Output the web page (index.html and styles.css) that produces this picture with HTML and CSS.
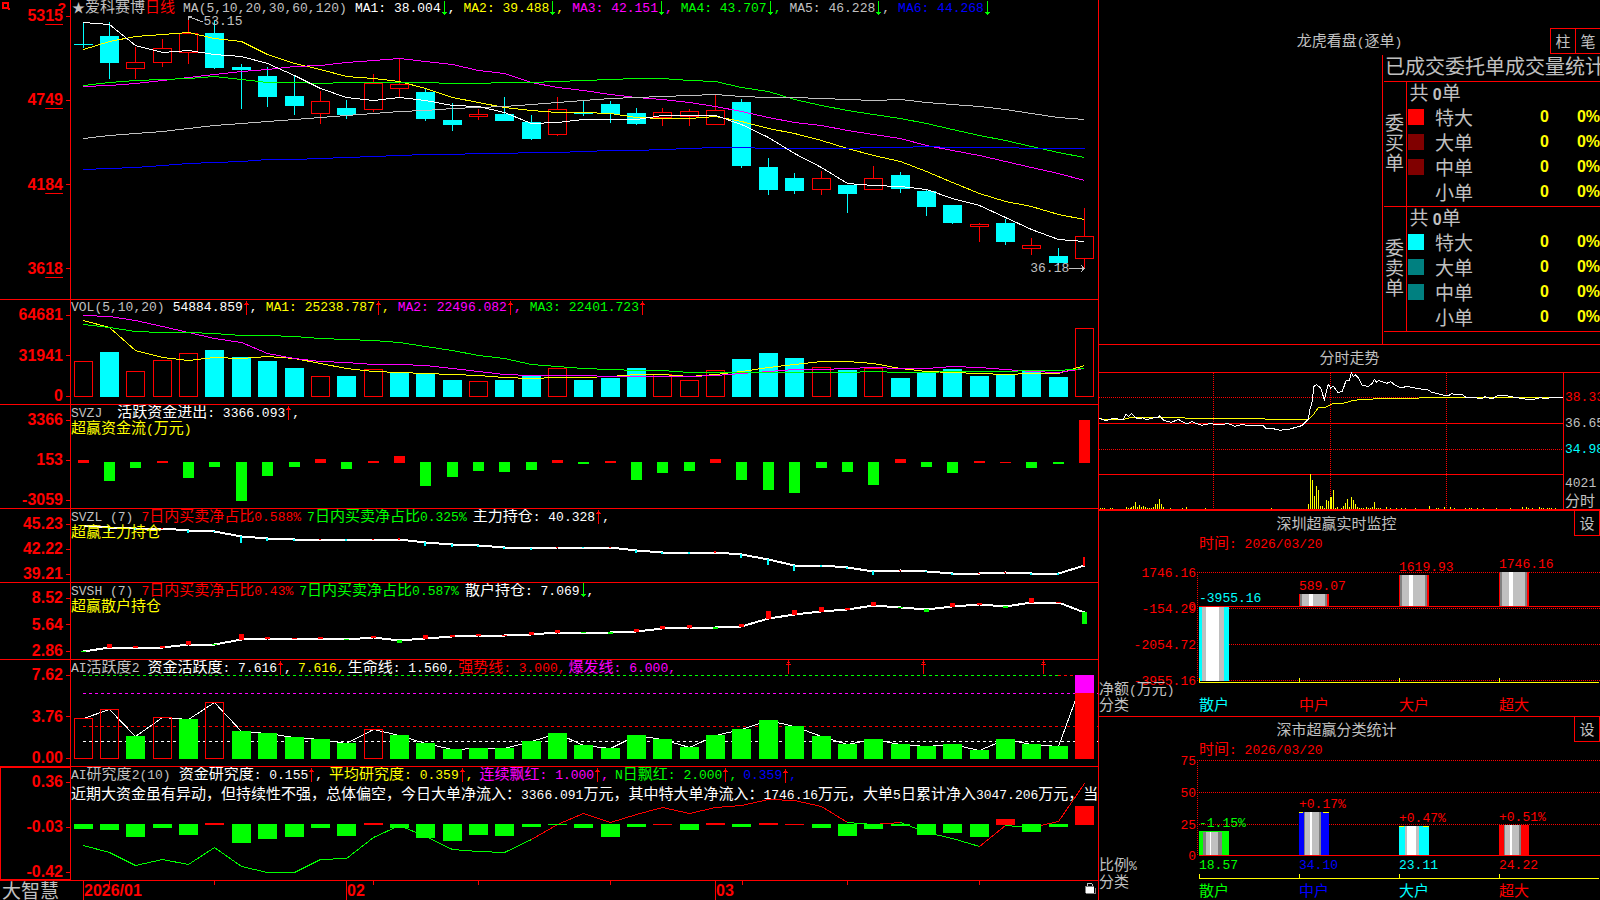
FILE: index.html
```html
<!DOCTYPE html>
<html lang="zh-CN">
<head>
    <meta charset="UTF-8">
    <meta name="viewport" content="width=device-width, initial-scale=1.0">
    <title>爱科赛博 日线</title>
    <link rel="stylesheet" href="styles.css">
</head>
<body>
    <svg class="defs" aria-hidden="true">
        <symbol id="up" viewBox="0 0 6 16"><path d="M3 1h1v14h-1zM2 3h3v2h-3zM1 4h1v1h-1zM5 4h1v1h-1z"/></symbol>
        <symbol id="down" viewBox="0 0 6 16"><path d="M3 0h1v14h-1zM2 11h3v2h-3zM1 11h1v1h-1zM5 11h1v1h-1z"/></symbol>
    </svg>
    <div class="terminal">
        <main class="charts">
            <section class="row price-row">
                <div class="axis">
                    <svg class="corner" width="10" height="10" viewBox="0 0 10 10"><path d="M0 0h7v6h1v2h-2v-1h-6zM2 2v3h3v-3z" fill-rule="evenodd"/></svg>
                    <button class="help" aria-label="帮助">?</button>
                    <span><b>53<u>15</u></b></span><span><b>47<u>49</u></b></span><span><b>41<u>84</u></b></span><span><b>36<u>18</u></b></span>
                </div>
                <div class="plot">
                    <svg id="price" viewBox="71 0 1027 299" preserveAspectRatio="none"></svg>
                    <div class="legend top-legend">
                        <h1>★<span class="cn">爱科赛博<em>日线</em></span></h1>
                        <span class="gray">MA(5,10,20,30,60,120)</span>
                        <span>MA1: 38.004<svg class="down"><use href="#down"/></svg>,</span>
                        <span class="yellow">MA2: 39.488<svg class="down"><use href="#down"/></svg>,</span>
                        <span class="magenta">MA3: 42.151<svg class="down"><use href="#down"/></svg>,</span>
                        <span class="green">MA4: 43.707<svg class="down"><use href="#down"/></svg>,</span>
                        <span class="gray">MA5: 46.228<svg class="down"><use href="#down"/></svg>,</span>
                        <span class="blue">MA6: 44.268<svg class="down"><use href="#down"/></svg></span>
                    </div>
                    <span class="note high">53.15</span>
                    <span class="note low">36.18</span>
                </div>
            </section>

            <section class="row">
                <div class="axis"><span><b>64681</b></span><span><b>31941</b></span><span><b>0</b></span></div>
                <div class="plot">
                    <svg id="volume" viewBox="71 300 1027 104" preserveAspectRatio="none"></svg>
                    <div class="legend volume-legend">
                        <span class="gray">VOL(5,10,20)</span>
                        <span>54884.859<svg class="up"><use href="#up"/></svg>,</span>
                        <span class="yellow">MA1: 25238.787<svg class="up"><use href="#up"/></svg>,</span>
                        <span class="magenta">MA2: 22496.082<svg class="up"><use href="#up"/></svg>,</span>
                        <span class="green">MA3: 22401.723<svg class="up"><use href="#up"/></svg></span>
                    </div>
                </div>
            </section>

            <section class="row">
                <div class="axis"><span><b>3366</b></span><span><b>153</b></span><span><b>-3059</b></span></div>
                <div class="plot">
                    <svg id="flow" viewBox="71 405 1027 103" preserveAspectRatio="none"></svg>
                    <div class="legend">
                        <span class="gray wide">SVZJ</span>
                        <span><span class="cn">活跃资金进出</span>: 3366.093<svg class="up"><use href="#up"/></svg>,</span>
                    </div>
                    <h2>超赢资金流<span>(</span>万元<span>)</span></h2>
                </div>
            </section>

            <section class="row">
                <div class="axis"><span><b>45.23</b></span><span><b>42.22</b></span><span><b>39.21</b></span></div>
                <div class="plot">
                    <svg id="main-hold" viewBox="71 509 1027 73" preserveAspectRatio="none"></svg>
                    <div class="legend">
                        <span class="gray name">SVZL (7)</span>
                        <span class="red">7<span class="cn">日内买卖净占比</span>0.588%</span>
                        <span class="green">7<span class="cn">日内买卖净占比</span>0.325%</span>
                        <span><span class="cn">主力持仓</span>: 40.328<svg class="up"><use href="#up"/></svg>,</span>
                    </div>
                    <h2>超赢主力持仓</h2>
                </div>
            </section>

            <section class="row">
                <div class="axis"><span><b>8.52</b></span><span><b>5.64</b></span><span><b>2.86</b></span></div>
                <div class="plot">
                    <svg id="retail-hold" viewBox="71 583 1027 76" preserveAspectRatio="none"></svg>
                    <div class="legend">
                        <span class="gray name">SVSH (7)</span>
                        <span class="red">7<span class="cn">日内买卖净占比</span>0.43%</span>
                        <span class="green">7<span class="cn">日内买卖净占比</span>0.587%</span>
                        <span><span class="cn">散户持仓</span>: 7.069<svg class="down"><use href="#down"/></svg>,</span>
                    </div>
                    <h2>超赢散户持仓</h2>
                </div>
            </section>

            <section class="row">
                <div class="axis"><span><b>7.62</b></span><span><b>3.76</b></span><span><b>0.00</b></span></div>
                <div class="plot">
                    <svg id="active" viewBox="71 660 1027 106" preserveAspectRatio="none"></svg>
                    <div class="legend">
                        <span class="gray name">AI<span class="cn">活跃度</span>2</span>
                        <span><span class="cn">资金活跃度</span>: 7.616<svg class="up"><use href="#up"/></svg>,</span>
                        <span class="yellow plain">7.616,</span>
                        <span class="plain"><span class="cn">生命线</span>: 1.560,</span>
                        <span class="red plain"><span class="cn">强势线</span>: 3.000,</span>
                        <span class="magenta plain"><span class="cn">爆发线</span>: 6.000,</span>
                    </div>
                </div>
            </section>

            <section class="row">
                <div class="axis selected"><span><b>0.36</b></span><span><b>-0.03</b></span><span><b>-0.42</b></span></div>
                <div class="plot">
                    <svg id="research" viewBox="71 767 1027 113" preserveAspectRatio="none"></svg>
                    <div class="legend">
                        <span class="gray name">AI<span class="cn">研究度</span>2(10)</span>
                        <span><span class="cn">资金研究度</span>: 0.155<svg class="up"><use href="#up"/></svg>,</span>
                        <span class="yellow"><span class="cn">平均研究度</span>: 0.359<svg class="up"><use href="#up"/></svg>,</span>
                        <span class="magenta"><span class="cn">连续飘红</span>: 1.000<svg class="up"><use href="#up"/></svg>,</span>
                        <span class="green">N<span class="cn">日飘红</span>: 2.000<svg class="up"><use href="#up"/></svg>,</span>
                        <span class="blue">0.359<svg class="up"><use href="#up"/></svg>,</span>
                    </div>
                    <p class="message">近期大资金虽有异动，但持续性不强，总体偏空，今日大单净流入：<span>3366.091</span>万元，其中特大单净流入：<span>1746.16</span>万元，大单<span>5</span>日累计净入<span>3047.206</span>万元，当日</p>
                </div>
            </section>

            <footer class="dates">
                <span class="brand">大智慧</span>
                <span></span>
                <b>2026/01</b>
                <b>02</b>
                <b>03</b>
                <svg id="ticks" viewBox="71 881 1027 19" preserveAspectRatio="none"></svg>
                <svg class="lock" width="11" height="13" viewBox="0 0 11 13"><path d="M2 4V2l1-1h3l1 1v2" fill="none" stroke="#c0c0c0"/><path d="M1 5h8v6h-8z" fill="#fff"/><path d="M0 4.5h9M.5 5v6M1 11.500h9.500v-6" fill="none" stroke="#808080"/></svg>
            </footer>
        </main>

        <aside class="side">
            <section class="orders">
                <header>
                    <h3>龙虎看盘<span>(</span>逐单<span>)</span></h3>
                    <div class="tools"><button>柱</button><button>笔</button></div>
                </header>
                <div class="stats">
                    <h4 id="stats-title">已成交委托单成交量统计</h4>
                    <table aria-labelledby="stats-title">
                        <colgroup><col class="col-kind"><col class="col-box"><col class="col-name"><col class="col-count"><col></colgroup>
                        <tbody>
                            <tr><th rowspan="5" class="kind">委买单</th><td colspan="4" class="total">共 <b>0</b>单</td></tr>
                            <tr><td><i class="box buy-1"></i></td><th>特大</th><td class="num">0</td><td class="num">0%</td></tr>
                            <tr><td><i class="box buy-2"></i></td><th>大单</th><td class="num">0</td><td class="num">0%</td></tr>
                            <tr><td><i class="box buy-2"></i></td><th>中单</th><td class="num">0</td><td class="num">0%</td></tr>
                            <tr><td></td><th>小单</th><td class="num">0</td><td class="num">0%</td></tr>
                        </tbody>
                        <tbody>
                            <tr><th rowspan="5" class="kind">委卖单</th><td colspan="4" class="total">共 <b>0</b>单</td></tr>
                            <tr><td><i class="box sell-1"></i></td><th>特大</th><td class="num">0</td><td class="num">0%</td></tr>
                            <tr><td><i class="box sell-2"></i></td><th>大单</th><td class="num">0</td><td class="num">0%</td></tr>
                            <tr><td><i class="box sell-2"></i></td><th>中单</th><td class="num">0</td><td class="num">0%</td></tr>
                            <tr><td></td><th>小单</th><td class="num">0</td><td class="num">0%</td></tr>
                        </tbody>
                    </table>
                </div>
            </section>

            <section class="intraday">
                <h3>分时走势</h3>
                <div class="intraday-body">
                    <svg id="intraday" viewBox="27 99 1392 408" preserveAspectRatio="none"></svg>
                    <div class="prices">
                        <span class="red">38.33</span>
                        <span class="gray">36.65</span>
                        <span class="cyan">34.98</span>
                        <div class="gray">4021<br><span class="cn">分时</span></div>
                    </div>
                </div>
            </section>

            <section class="monitor">
                <header><h3>深圳超赢实时监控</h3><button>设</button></header>
                <svg id="monitor" viewBox="1099 536 501 180">
                    <g class="dotted">
                        <path d="M1197 572.500H1600M1197 608.500H1600M1197 644.500H1600M1197 680.500H1600M1197.500 572V681"/>
                    </g>
                    <text class="red" x="1199" y="548"><tspan class="cn">时间</tspan>: 2026/03/20</text>
                    <g class="red end">
                        <text x="1196" y="577">1746.16</text>
                        <text x="1196" y="613">-154.29</text>
                        <text x="1196" y="611">0</text>
                        <text x="1196" y="649">-2054.72</text>
                        <text x="1196" y="685">-3955.16</text>
                    </g>
                    <g id="monitor-bars"></g>
                    <path d="M1199 606.500H1600" stroke="#f00"/>
                    <path d="M1199.500 678V682.500H1599M1299.500 678v4M1399.500 678v4M1499.500 678v4" stroke="#ff0" fill="none"/>
                    <text class="cyan" x="1199" y="602">-3955.16</text>
                    <g class="red">
                        <text x="1299" y="590">589.07</text>
                        <text x="1399" y="571">1619.93</text>
                        <text x="1499" y="568">1746.16</text>
                    </g>
                    <g class="gray">
                        <text x="1099" y="694"><tspan class="cn">净额</tspan>(<tspan class="cn">万元</tspan>)</text>
                        <text class="cn" x="1099" y="710">分类</text>
                    </g>
                    <text class="cn cyan" x="1199" y="710">散户</text>
                    <text class="cn red" x="1299" y="710">中户</text>
                    <text class="cn red" x="1399" y="710">大户</text>
                    <text class="cn red" x="1499" y="710">超大</text>
                </svg>
            </section>

            <section class="classes">
                <header><h3>深市超赢分类统计</h3><button>设</button></header>
                <svg id="classes" viewBox="1099 742 501 158">
                    <g class="dotted">
                        <path d="M1197 760.500H1600M1197 792.500H1600M1197 824.500H1600M1197.500 760V856"/>
                    </g>
                    <text class="red" x="1199" y="754"><tspan class="cn">时间</tspan>: 2026/03/20</text>
                    <g class="red end">
                        <text x="1196" y="765">75</text>
                        <text x="1196" y="797">50</text>
                        <text x="1196" y="829">25</text>
                        <text x="1196" y="860">0</text>
                    </g>
                    <g id="classes-bars"></g>
                    <path d="M1199 855.500H1600" stroke="#f00"/>
                    <path d="M1199.500 874V878.500H1599M1299.500 874v4M1399.500 874v4M1499.500 874v4" stroke="#ff0" fill="none"/>
                    <text class="green" x="1199" y="827">-1.15%</text>
                    <g class="red">
                        <text x="1299" y="808">+0.17%</text>
                        <text x="1399" y="822">+0.47%</text>
                        <text x="1499" y="821">+0.51%</text>
                    </g>
                    <text class="green" x="1199" y="869">18.57</text>
                    <text class="blue" x="1299" y="869">34.10</text>
                    <text class="cyan" x="1399" y="869">23.11</text>
                    <text class="red" x="1499" y="869">24.22</text>
                    <g class="gray">
                        <text x="1099" y="870"><tspan class="cn">比例</tspan>%</text>
                        <text class="cn" x="1099" y="887">分类</text>
                    </g>
                    <text class="cn green" x="1199" y="896">散户</text>
                    <text class="cn blue" x="1299" y="896">中户</text>
                    <text class="cn cyan" x="1399" y="896">大户</text>
                    <text class="cn red" x="1499" y="896">超大</text>
                </svg>
            </section>
        </aside>
    </div>
    <script src="script.js"></script>
</body>
</html>
```
FILE: styles.css
```css
* {
    box-sizing: border-box;
}
body {
    margin: 0;
    background: #000;
    color: #fff;
    font: 13px/16px "Liberation Mono", "Noto Sans CJK SC", monospace;
}
h1, h2, h3, h4, p {
    margin: 0;
    font-weight: normal;
}
button {
    padding: 0;
    background: #000;
    border: 0 solid #f00;
    color: #c0c0c0;
    font: 15px/24px "Noto Sans CJK SC", sans-serif;
    cursor: pointer;
}
svg {
    display: block;
    shape-rendering: crispEdges;
}
.defs {
    position: absolute;
    width: 0;
    height: 0;
}
.cn {
    font-family: "Noto Sans CJK SC", sans-serif;
    font-size: 15px;
}
.red { color: #f00; fill: #f00; }
.green { color: #0f0; fill: #0f0; }
.blue { color: #00f; fill: #00f; }
.cyan { color: #0ff; fill: #0ff; }
.yellow { color: #ff0; }
.magenta { color: #f0f; }
.gray { color: #c0c0c0; fill: #c0c0c0; }

.terminal {
    display: grid;
    grid-template-columns: minmax(0, 1099fr) minmax(0, 501fr);
    grid-template-rows: minmax(0, 1fr);
    height: 100vh;
    overflow: hidden;
}

/* left: stacked indicator charts */
.charts {
    display: grid;
    grid-template-rows: 300fr 105fr 104fr 74fr 77fr 107fr 114fr 19fr;
    border-right: 1px solid #f00;
    min-width: 0;
    min-height: 0;
}
.row {
    display: grid;
    grid-template-columns: 71px minmax(0, 1fr);
    grid-template-rows: minmax(0, 1fr);
    min-height: 0;
    border-bottom: 1px solid #f00;
}
.axis {
    position: relative;
    display: flex;
    flex-direction: column;
    justify-content: space-between;
    padding: 7px 0 0;
    border-right: 1px solid #f00;
    color: #f00;
    font: 16px/16px "Liberation Sans", sans-serif;
}
.axis > span {
    display: flex;
    align-items: center;
    justify-content: flex-end;
    gap: 3px;
}
.axis > span::after {
    content: "";
    width: 4px;
    height: 1px;
    background: #f00;
}
.axis u {
    text-decoration-thickness: 1px;
    text-underline-offset: 3px;
}
.price-row .axis {
    padding: 8px 0 22px;
}
.axis.selected {
    outline: 1px solid #f00;
    outline-offset: -1px;
}
.corner {
    position: absolute;
    left: 2px;
    top: 2px;
    fill: #f00;
}
.help {
    position: absolute;
    right: 4px;
    top: 0;
    background: none;
    color: #f00;
    font: bold 14px/16px "Liberation Sans", sans-serif;
}
.plot {
    position: relative;
    overflow: hidden;
}
.plot > svg {
    position: absolute;
    inset: 0;
    width: 100%;
    height: 100%;
}
.legend {
    position: relative;
    display: flex;
    align-items: baseline;
    gap: 6px;
    height: 16px;
    white-space: nowrap;
}
.legend svg {
    display: inline-block;
    width: 6px;
    height: 16px;
    margin-right: 1px;
    vertical-align: top;
}
.legend .cn {
    line-height: 12px;
}
.legend .name {
    margin-right: 2px;
}
.legend .wide {
    margin-right: 9px;
}
.legend .plain {
    margin-right: -3px;
}
.up { fill: #f00; }
.down { fill: #0f0; }
.legend.top-legend {
    gap: 8px;
    padding-left: 1px;
}
.legend.volume-legend {
    gap: 8px;
}
.legend h1 {
    font-size: 13px;
    color: #c0c0c0;
}
.legend em {
    font-style: normal;
    color: #f00;
}
.plot h2 {
    position: relative;
    color: #ff0;
    font: 15px/12px "Noto Sans CJK SC", sans-serif;
}
.plot h2 span {
    font: 13px/12px "Liberation Mono", monospace;
}
.message {
    position: relative;
    margin-top: 2px;
    font: 15px/16px "Noto Sans CJK SC", sans-serif;
    white-space: nowrap;
}
.message span {
    font: 13px/16px "Liberation Mono", monospace;
}
.note {
    position: absolute;
    color: #c0c0c0;
}
.note.high {
    left: 12.9%;
    top: 14px;
}
.note.low {
    right: 2.8%;
    bottom: 22px;
}
.dates {
    position: relative;
    display: grid;
    grid-template-columns: 71px 12fr 263fr 369fr 383fr;
    min-height: 0;
    color: #f00;
    font: bold 16px/19px "Liberation Sans", sans-serif;
}
.dates b {
    border-left: 1px solid #f00;
}
.brand {
    padding-left: 2px;
    color: #c0c0c0;
    font: 19px/17px "Noto Sans CJK SC", sans-serif;
}
#ticks {
    position: absolute;
    left: 71px;
    top: 0;
    width: calc(100% - 71px);
    height: 100%;
}
.lock {
    position: absolute;
    right: 2px;
    top: 1px;
}

/* right: order statistics and fund panels */
.side {
    display: grid;
    grid-template-rows: 345fr 166fr 206fr 183fr;
    min-width: 0;
    min-height: 0;
}
.side section {
    min-height: 0;
    min-width: 0;
    overflow: hidden;
    border-bottom: 1px solid #f00;
}
.side .classes {
    border-bottom: 0;
}
.side h3 {
    color: #c0c0c0;
    font: 15px/24px "Noto Sans CJK SC", sans-serif;
    text-align: center;
}
.side h3 span {
    font: 13px/24px "Liberation Mono", monospace;
}
.orders {
    display: flex;
    flex-direction: column;
}
.orders header {
    display: grid;
    grid-template-columns: 1fr auto 1fr;
    padding-top: 28px;
}
.orders h3 {
    grid-column: 2;
}
.tools {
    grid-column: 3;
    justify-self: end;
    display: flex;
}
.tools button {
    width: 25px;
    height: 26px;
    border-width: 1px 0 1px 1px;
}
.stats {
    flex: 1;
    align-self: flex-end;
    width: 218px;
    padding-left: 1px;
    border-left: 1px solid #f00;
    overflow: hidden;
}
.stats h4 {
    height: 26px;
    padding-left: 1px;
    color: #c0c0c0;
    font: 20px/22px "Noto Sans CJK SC", sans-serif;
    white-space: nowrap;
}
.stats table {
    width: 100%;
    table-layout: fixed;
    border-collapse: collapse;
    color: #c0c0c0;
    font: 19px/20px "Noto Sans CJK SC", sans-serif;
}
.stats tbody {
    border-top: 1px solid #f00;
    border-bottom: 1px solid #f00;
}
.col-kind { width: 22px; }
.col-box { width: 29px; }
.col-name { width: 60px; }
.col-count { width: 54px; }
.stats td, .stats th {
    height: 25px;
    padding: 0;
    font-weight: normal;
    text-align: left;
    vertical-align: top;
    white-space: nowrap;
}
.stats .kind {
    padding: 0 0 4px 1px;
    border-right: 1px solid #f00;
    vertical-align: middle;
    white-space: normal;
}
.stats .total {
    padding-left: 3px;
}
.stats .total b {
    font: bold 16px/16px "Liberation Sans", sans-serif;
}
.box {
    display: block;
    width: 16px;
    height: 16px;
    margin: 2px 0 0 1px;
}
.buy-1 { background: #f00; }
.buy-2 { background: #800000; }
.sell-1 { background: #0ff; }
.sell-2 { background: #008080; }
.stats .num {
    color: #ff0;
    font: bold 16px/20px "Liberation Sans", sans-serif;
    text-align: right;
}
.side .intraday {
    display: flex;
    flex-direction: column;
    border-bottom-width: 2px;
}
.intraday h3 {
    height: 27px;
}
.intraday-body {
    flex: 1;
    min-height: 0;
    display: flex;
    border-top: 1px solid #f00;
}
#intraday {
    flex: 1;
    min-width: 0;
    height: 100%;
    overflow: visible;
}
#intraday path {
    vector-effect: non-scaling-stroke;
}
.prices {
    width: 37px;
    padding: 17px 0 0 1px;
    border-left: 1px solid #f00;
    display: flex;
    flex-direction: column;
    gap: 10px;
}
.prices div {
    padding-top: 8px;
    line-height: 16px;
}
.monitor header, .classes header {
    display: flex;
}
.monitor header h3, .classes header h3 {
    flex: 1;
}
.monitor header button, .classes header button {
    width: 26px;
    height: 25px;
    border-width: 0 1px 1px 1px;
}
#monitor, #classes {
    width: 100%;
}
.dotted {
    fill: none;
    stroke: #f00;
    stroke-dasharray: 1 1;
}
.end {
    text-anchor: end;
}
```
FILE: script.js
```js
const RED = '#f00', GREEN = '#0f0', CYAN = '#0ff', YELLOW = '#ff0', MAGENTA = '#f0f', GRAY = '#c0c0c0', BLUE = '#00f', WHITE = '#fff';

// x of the n-th trading day
function px(i) {
    return Math.floor(83.2 + 26.35 * i);
}
function rect(x, y, w, h, color) {
    return `<rect x="${x}" y="${y}" width="${w}" height="${h}" fill="${color}"/>`;
}
function hollow(x, y, w, h) {
    return `<rect x="${x + 0.5}" y="${y + 0.5}" width="${w - 1}" height="${Math.max(h - 1, 1)}" fill="none" stroke="${RED}"/>`;
}
function line(values, color, width = 1, from = 0) {
    const points = values.map((y, i) => `${px(i + from) + 0.5},${y + 0.5}`).join(' ');
    return `<polyline points="${points}" fill="none" stroke="${color}" stroke-width="${width}"/>`;
}
function draw(id, html) {
    document.getElementById(id).innerHTML = html;
}

// high, body top, body bottom, low, up/down
const candles = [
    [22, 44, 45, 48, 0], [22, 36, 63, 79, 0], [47, 62, 69, 79, 1], [39, 48, 63, 67, 1], [16, 33, 53, 64, 1],
    [21, 33, 68, 69, 0], [64, 67, 70, 109, 0], [67, 76, 97, 107, 0], [75, 96, 106, 115, 0], [91, 101, 114, 124, 1],
    [100, 108, 115, 119, 0], [74, 83, 110, 112, 1], [59, 84, 89, 97, 1], [89, 92, 119, 121, 0], [103, 120, 125, 131, 0],
    [109, 114, 117, 120, 1], [97, 114, 121, 121, 0], [115, 122, 139, 140, 0], [97, 109, 135, 136, 1], [101, 113, 114, 116, 0],
    [101, 104, 114, 123, 0], [108, 113, 124, 125, 0], [108, 112, 118, 126, 1], [109, 111, 117, 126, 1], [95, 110, 125, 125, 1],
    [99, 102, 166, 168, 0], [158, 167, 190, 195, 0], [173, 178, 191, 194, 0], [171, 178, 190, 195, 1], [185, 185, 194, 213, 0],
    [166, 178, 190, 190, 1], [172, 175, 189, 193, 0], [190, 191, 207, 216, 0], [205, 205, 223, 224, 0], [223, 224, 227, 242, 1],
    [219, 223, 242, 245, 0], [238, 245, 249, 255, 1], [248, 256, 263, 265, 0], [208, 236, 259, 268, 1]
];
const ma = [
    [YELLOW, [49, 41, 36, 34, 32, 38, 41, 54, 63, 69, 76, 78, 81, 88, 97, 102, 107, 110, 112, 112, 113, 117, 118, 118, 116, 121, 128, 133, 140, 148, 155, 161, 171, 182, 193, 201, 206, 214, 219]],
    [MAGENTA, [86, 85, 83, 80, 77, 74, 71, 69, 66, 65, 62, 60, 58, 61, 64, 70, 73, 82, 87, 90, 94, 97, 99, 102, 106, 111, 117, 122, 125, 130, 134, 138, 145, 150, 155, 161, 167, 173, 180]],
    [GREEN, [85, 82, 80, 79, 78, 76, 79, 82, 82, 83, 82, 82, 82, 82, 83, 83, 82, 82, 81, 80, 79, 78, 78, 80, 81, 87, 91, 99, 105, 110, 114, 118, 123, 129, 135, 140, 146, 152, 157]],
    [GRAY, [138, 135, 133, 131, 128, 125, 123, 121, 119, 117, 115, 113, 111, 110, 108, 107, 106, 104, 102, 100, 98, 97, 96, 95, 94, 96, 97, 97, 98, 99, 100, 99, 102, 104, 106, 109, 113, 117, 119]],
    [BLUE, [169, 168, 167, 165, 163, 162, 161, 159, 159, 158, 157, 156, 155, 154, 154, 153, 153, 152, 152, 151, 150, 150, 149, 148, 147, 147, 148, 148, 148, 148, 147, 147, 146, 147, 147, 147, 148, 148, 148]],
    [WHITE, [22, 24, 45, 52, 50, 54, 56, 63, 75, 88, 97, 100, 97, 100, 105, 106, 112, 123, 122, 119, 119, 119, 115, 115, 115, 124, 137, 153, 167, 183, 185, 186, 189, 198, 205, 217, 229, 239, 241]]
];
let html = '';
candles.forEach(([high, top, bottom, low, up], i) => {
    const x = px(i);
    if (up) {
        html += rect(x, high, 1, top - high, RED) + rect(x, bottom, 1, low - bottom, RED) + hollow(x - 9, top, 19, bottom - top);
    } else {
        html += rect(x, high, 1, low - high, CYAN) + rect(x - 9, top, 19, bottom - top, CYAN);
    }
});
ma.forEach(([color, values]) => html += line(values, color));
// arrows to the highest and lowest price
html += `<path d="M203 22L188 16.500M188 20V16.500H192M1069 268.500H1084M1081 265L1084 268.500L1081 272" fill="none" stroke="${GRAY}"/>`;
draw('price', html);

const volume = [361, 352, 371, 360, 353, 350, 357, 361, 368, 376, 376, 369, 372, 373, 380, 381, 380, 376, 368, 380, 378, 368, 374, 380, 370, 359, 353, 358, 367, 370, 368, 378, 373, 369, 376, 374, 371, 377, 328];
const volumeUp = [0, 2, 3, 4, 9, 11, 15, 18, 22, 23, 24, 28, 30, 38];
html = '';
volume.forEach((top, i) => {
    html += volumeUp.includes(i) ? hollow(px(i) - 9, top, 19, 397 - top) : rect(px(i) - 9, top, 19, 397 - top, CYAN);
});
html += line([320, 327, 350, 357, 360, 357, 358, 356, 358, 363, 368, 371, 372, 373, 374, 375, 377, 378, 377, 377, 376, 374, 374, 376, 374, 371, 367, 364, 361, 361, 363, 368, 371, 372, 373, 374, 373, 373, 365], YELLOW);
html += line([315, 316, 320, 326, 332, 338, 342, 353, 358, 361, 362, 364, 364, 365, 368, 371, 374, 375, 375, 375, 376, 376, 376, 376, 375, 373, 371, 369, 369, 368, 367, 368, 368, 366, 367, 369, 371, 372, 368], MAGENTA);
html += line([324, 327, 331, 332, 332, 333, 335, 335, 336, 338, 339, 340, 342, 346, 350, 355, 358, 364, 366, 368, 369, 370, 370, 372, 372, 372, 372, 372, 372, 372, 371, 372, 372, 371, 371, 371, 370, 370, 368], GREEN);
draw('volume', html);

// bars on both sides of a zero line
function signedBars(values, zero, width) {
    return values.map((v, i) => {
        const x = px(i) - (width - 1) / 2;
        return v > 0 ? rect(x, zero + 1 - v, width, v, RED) : rect(x, zero, width, -v, GREEN);
    }).join('');
}
draw('flow', signedBars([3, -19, -6, 2, -16, -5, -39, -14, -5, 4, -7, 2, 7, -24, -15, -9, -10, -8, 3, -2, 2, -18, -11, -9, 4, -18, -28, -31, -6, -10, -23, 4, -5, -11, 2, 1, -6, -2, 43], 462, 11));

// holding line with the daily change drawn at each point
function holding(values, changes, width, downColor) {
    let out = line(values, WHITE, 2);
    changes.forEach((v, i) => {
        const x = px(i) - Math.floor(width / 2);
        if (v > 0) out += rect(x, values[i] - v + 1, width, v, RED);
        if (v < 0) out += rect(x, values[i], width, -v, downColor);
    });
    return out;
}
draw('main-hold', holding(
    [525, 527, 528, 528, 530, 531, 536, 538, 539, 539, 539, 539, 539, 542, 544, 545, 547, 548, 547, 547, 547, 550, 552, 552, 552, 554, 559, 565, 565, 567, 571, 570, 571, 573, 573, 572, 573, 573, 565],
    [1, -4, -2, 1, -3, -1, -7, -3, -2, 1, -2, 1, 2, -4, -3, -2, -2, -2, 1, -1, 1, -3, -2, -2, 2, -4, -6, -6, -2, -2, -4, 1, -1, -2, 1, 1, -2, -2, 9], 2, CYAN));
draw('retail-hold', holding(
    [651, 647, 647, 647, 644, 644, 639, 638, 638, 638, 639, 637, 640, 638, 636, 635, 635, 634, 632, 632, 632, 631, 628, 627, 627, 626, 618, 614, 611, 609, 605, 607, 609, 606, 604, 606, 602, 602, 612],
    [-1, 4, 2, 2, 4, -1, 6, 2, 1, 2, -1, 2, -3, 4, 2, 2, 1, 3, 3, -1, -2, 3, 3, 3, -2, 3, 8, 5, 5, 2, 4, -1, -3, 4, 2, -2, 5, 1, -12], 5, GREEN));

const active = [718, 709, 736, 717, 719, 702, 731, 733, 737, 739, 743, 729, 735, 743, 749, 748, 748, 741, 733, 745, 748, 735, 739, 747, 735, 729, 720, 726, 736, 744, 739, 744, 746, 744, 750, 739, 744, 746, 675];
const activeUp = [0, 1, 3, 5, 11];
html = '';
[[675, GREEN, 1058], [693, MAGENTA, 1098], [726, RED, 1098], [741, WHITE, 1098]].forEach(([y, color, end]) => {
    html += `<path d="M83 ${y + 0.5}H${end}" stroke="${color}" stroke-dasharray="3 3"/>`;
});
html += `<path d="M1058 675.5H1074" stroke="${RED}" stroke-dasharray="3 3"/>`;
html += line(active, WHITE);
active.forEach((top, i) => {
    if (i === 38) return;
    html += activeUp.includes(i) ? hollow(px(i) - 9, top, 19, 759 - top) : rect(px(i) - 9, top, 19, 759 - top, GREEN);
});
html += rect(px(38) - 9, 675, 19, 18, MAGENTA) + rect(px(38) - 9, 693, 19, 66, RED);
[788, 923, 1043].forEach(x => {
    html += `<path d="M${x}.500 660V674M${x - 2} 664.500H${x + 3}M${x - 1} 662.500H${x + 2}" stroke="${RED}"/>`;
});
draw('active', html);

const research = [845, 852, 865, 859, 864, 847, 866, 872, 872, 859, 858, 837, 825, 836, 849, 851, 852, 839, 824, 813, 822, 814, 807, 813, 807, 805, 799, 800, 806, 822, 824, 822, 832, 838, 846, 825, 827, 821, 783];
html = '';
[[0, 17, GREEN], [17, 29, RED], [29, 30, GREEN], [30, 31, RED], [31, 34, GREEN], [34, 35, RED], [35, 36, GREEN], [36, 38, RED]].forEach(([a, b, color]) => {
    html += line(research.slice(a, b + 1), color, 1, a);
});
html += signedBars([-5, -6, -13, -4, -11, 2, -19, -15, -13, -4, -12, 2, -4, -14, -17, -11, -12, -3, -1, -4, -13, -3, 1, -6, 2, -3, 2, 1, -4, -12, -5, -2, -11, -9, -13, 6, -8, -3, 19], 824, 19);
draw('research', html);

draw('ticks', [109, 214, 373, 478, 610, 742, 847, 979].map(x => rect(x, 881, 1, 4, RED)).join(''));

// intraday: price, average, volume
const price = '28,236 50,242 68,235 100,239 108,223 116,229 125,221 140,235 158,234 168,239 190,234 205,233 209,227 222,242 245,247 265,238 290,252 305,245 335,256 360,251 395,255 412,250 435,259 455,254 490,258 520,257 527,265 545,265 570,271 600,267 635,257 655,238 660,208 667,184 671,140 680,134 692,144 703,179 715,133 722,144 730,139 744,158 757,154 768,122 778,122 784,98 790,110 796,104 806,115 816,136 835,139 845,132 854,118 860,128 866,121 878,126 890,130 902,125 916,136 934,144 950,139 985,146 1015,150 1025,157 1060,165 1075,168 1085,160 1095,164 1118,164 1128,172 1160,174 1175,177 1185,170 1205,177 1225,166 1250,167 1275,172 1310,178 1330,178 1350,173 1370,176 1385,172 1418,174';
const average = '28,236 50,239 105,237 125,232 280,233 290,235 520,235 527,238 655,238 670,224 685,203 705,202 716,197 728,191 760,190 790,181 820,178 850,177 855,175 985,175 992,172 1418,172';
const deals = [[31, 504], [37, 504], [43, 504], [61, 504], [67, 504], [109, 501], [115, 504], [121, 504], [124, 501], [130, 497], [136, 486], [142, 501], [148, 494], [154, 501], [160, 497], [166, 500], [172, 504], [178, 504], [184, 504], [190, 500], [196, 491], [202, 491], [208, 476], [214, 491], [220, 500], [241, 504], [277, 504], [289, 500], [346, 504], [544, 504], [655, 491], [661, 402], [667, 419], [673, 468], [679, 438], [685, 450], [691, 497], [697, 497], [703, 503], [709, 480], [715, 483], [721, 471], [724, 471], [730, 450], [736, 503], [742, 500], [754, 503], [760, 497], [766, 489], [772, 477], [778, 500], [784, 471], [790, 480], [796, 491], [802, 500], [808, 504], [814, 504], [820, 504], [829, 500], [835, 504], [841, 504], [847, 501], [853, 486], [859, 504], [865, 504], [871, 504], [889, 500], [901, 504], [919, 504], [934, 504], [946, 504], [976, 504], [1018, 497], [1039, 504], [1045, 504], [1063, 501], [1081, 501], [1093, 504], [1126, 504], [1138, 504], [1144, 504], [1162, 504], [1180, 504], [1219, 504], [1261, 504], [1297, 500], [1309, 501], [1315, 504], [1327, 504], [1348, 500], [1354, 504], [1360, 504], [1372, 504], [1378, 504], [1384, 504], [1396, 504]];
html = `<path d="M27 172.500H1419M27 328.500H1419M370.500 99V507M721.500 99V507M1069.500 99V507" stroke="${RED}" stroke-dasharray="1 1"/>`;
html += `<path d="M27 250.500H1419M27 403.500H1419" stroke="${RED}"/>`;
deals.forEach(([x, y]) => html += rect(x - 1, y, 3, 507 - y, YELLOW));
html += `<path d="M${average}" fill="none" stroke="${YELLOW}"/><path d="M${price}" fill="none" stroke="${WHITE}"/>`;
draw('intraday', html);

// cylinder-like bar: list of [width, color] slices from left to right
function cylinder(x, y, height, slices) {
    let out = '';
    slices.forEach(([width, color]) => {
        out += rect(x, y, width, height, color);
        x += width;
    });
    return out;
}
const DARK = '#808080';
const redSlices = [[1, RED], [2, DARK], [7, GRAY], [4, WHITE], [12, GRAY], [2, DARK], [2, RED]];
draw('monitor-bars',
    cylinder(1199, 607, 74, [[3, CYAN], [4, GRAY], [13, WHITE], [5, GRAY], [5, CYAN]]) +
    cylinder(1299, 594, 12, redSlices) +
    cylinder(1399, 575, 31, redSlices) +
    cylinder(1499, 572, 34, redSlices));
draw('classes-bars',
    cylinder(1199, 831, 24, [[4, GREEN], [3, DARK], [4, GRAY], [1, WHITE], [7, GRAY], [4, DARK], [7, GREEN]]) + rect(1199, 831, 30, 1, GREEN) +
    cylinder(1299, 812, 43, [[5, BLUE], [1, DARK], [5, GRAY], [2, WHITE], [7, GRAY], [2, DARK], [8, BLUE]]) + rect(1299, 812, 4, 1, YELLOW) + rect(1323, 812, 6, 1, YELLOW) +
    cylinder(1399, 826, 29, [[6, CYAN], [2, GRAY], [9, WHITE], [3, GRAY], [10, CYAN]]) + rect(1399, 826, 5, 1, YELLOW) + rect(1423, 826, 6, 1, YELLOW) +
    cylinder(1499, 825, 30, [[5, RED], [1, DARK], [5, GRAY], [2, WHITE], [7, GRAY], [2, DARK], [8, RED]]));
```
